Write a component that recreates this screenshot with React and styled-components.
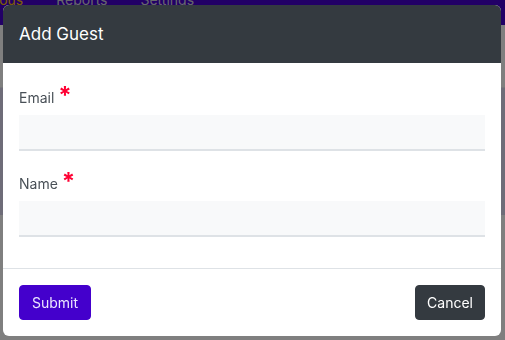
import React from 'react'
import styled, { createGlobalStyle } from 'styled-components'

const GlobalStyle = createGlobalStyle`
  * { box-sizing: border-box; }
  html, body { margin: 0; padding: 0; }
  body {
    width: 505px;
    height: 340px;
    overflow: hidden;
    font-family: Inter, "Liberation Sans", sans-serif;
    background: #ffffff;
  }
`;

const Page = styled.div`
  height: 340px;
  display: flex;
  flex-direction: column;
`;

const Nav = styled.nav`
  height: 25px;
  background: #4400cc;
  display: flex;
  align-items: flex-start;
  gap: 33px;
  overflow: hidden;
`;

const NavLink = styled.span`
  margin-top: -8px;
  font-size: 14px;
  line-height: 16px;
  color: ${props => props.active ? "#ffc107" : "#cfcfd8"};
  &:first-child { margin-left: -34px; }
`;

const Toolbar = styled.div`
  height: 63px;
  border-bottom: 1px solid #ececf2;
`;

const Band = styled.div`
  height: 127px;
  background: #ddd9f0;
  display: flex;
  flex-direction: column;
  justify-content: center;
  padding: 0 6px;
  font-size: 16px;
  color: #111;
`;

const BandRow = styled.div`
  display: flex;
  justify-content: space-between;
  line-height: 25px;
`;

const Overlay = styled.div`
  position: fixed;
  inset: 0;
  background: rgba(0, 0, 0, 0.5);
`;

const Modal = styled.div`
  position: fixed;
  top: 5px;
  left: 3px;
  width: 498px;
  background: #ffffff;
  border-radius: 6px;
  overflow: hidden;
  display: flex;
  flex-direction: column;
`;

const Header = styled.div`
  background: #343a40;
  padding: 16px;
  height: 58px;
  display: flex;
  align-items: center;
`;

const Title = styled.h5`
  margin: 0;
  font-size: 17px;
  font-weight: 400;
  line-height: 26px;
  color: #ffffff;
`;

const Body = styled.div`
  padding: 24px 16px 9px;
  border-bottom: 1px solid #dee2e6;
`;

const Field = styled.div`
  margin-bottom: 22px;
`;

const Label = styled.label`
  display: flex;
  align-items: flex-start;
  gap: 4px;
  font-size: 14px;
  line-height: 21px;
  color: #495057;
  margin-bottom: 7px;
`;

const Required = styled.span`
  color: #ff0033;
  font-size: 24px;
  font-weight: 700;
  line-height: 16px;
  margin-top: 1px;
`;

const Input = styled.input`
  display: block;
  width: 100%;
  height: 36px;
  border: none;
  border-bottom: 2px solid #dee2e6;
  background: #f8f9fa;
  padding: 6px 12px;
  font-family: inherit;
  font-size: 14px;
  outline: none;
`;

const Footer = styled.div`
  padding: 16px;
  display: flex;
  justify-content: space-between;
  align-items: center;
`;

const Button = styled.button`
  font-family: inherit;
  font-size: 14px;
  line-height: 21px;
  height: 35px;
  padding: 6px ${props => props.variant === "primary" ? "12px" : "11px"};
  border: 1px solid ${props => props.variant === "primary" ? "#4400cc" : "#343a40"};
  border-radius: 4px;
  background: ${props => props.variant === "primary" ? "#4400cc" : "#343a40"};
  color: ${props => props.variant === "primary" ? "#ece6ff" : "#ffffff"};
  cursor: pointer;
`;

const App = () => {
    return (
        <>
            <GlobalStyle />
            <Page>
                <Nav>
                    <NavLink active>Previous</NavLink>
                    <NavLink>Reports</NavLink>
                    <NavLink>Settings</NavLink>
                </Nav>
                <Toolbar />
                <Band>
                    <BandRow><span>:</span><span>t</span></BandRow>
                    <BandRow><span>n</span><span>r</span></BandRow>
                </Band>
            </Page>
            <Overlay />
            <Modal>
                <Header>
                    <Title>Add Guest</Title>
                </Header>
                <Body>
                    <Field>
                        <Label>Email <Required>*</Required></Label>
                        <Input type="email" />
                    </Field>
                    <Field>
                        <Label>Name <Required>*</Required></Label>
                        <Input type="text" />
                    </Field>
                </Body>
                <Footer>
                    <Button variant="primary">Submit</Button>
                    <Button>Cancel</Button>
                </Footer>
            </Modal>
        </>
    )
}

export default App
